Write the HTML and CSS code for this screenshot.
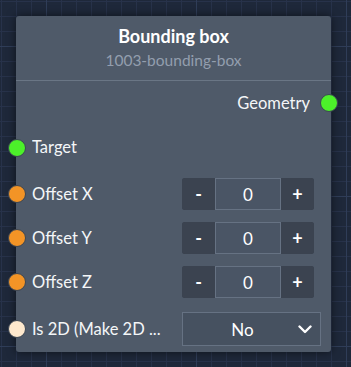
FILE: index.html
```html
<!DOCTYPE html>
<html>
<head>
<meta charset="utf-8">
<link rel="stylesheet" href="styles.css">
</head>
<body>
<div class="node">
  <div class="node-header">
    <div class="node-title">Bounding box</div>
    <div class="node-id">1003-bounding-box</div>
  </div>
  <div class="node-body">
    <div class="row row-output">
      <span class="label">Geometry</span>
      <span class="dot dot-out dot-green"></span>
    </div>
    <div class="row row-target">
      <span class="dot dot-in dot-green"></span>
      <span class="label">Target</span>
    </div>
    <div class="row row-input">
      <span class="dot dot-in dot-orange"></span>
      <span class="label">Offset X</span>
      <div class="stepper">
        <button class="step">-</button>
        <span class="value">0</span>
        <button class="step">+</button>
      </div>
    </div>
    <div class="row row-input">
      <span class="dot dot-in dot-orange"></span>
      <span class="label">Offset Y</span>
      <div class="stepper">
        <button class="step">-</button>
        <span class="value">0</span>
        <button class="step">+</button>
      </div>
    </div>
    <div class="row row-input">
      <span class="dot dot-in dot-orange"></span>
      <span class="label">Offset Z</span>
      <div class="stepper">
        <button class="step">-</button>
        <span class="value">0</span>
        <button class="step">+</button>
      </div>
    </div>
    <div class="row row-select">
      <span class="dot dot-in dot-cream"></span>
      <span class="label">Is 2D (Make 2D ...</span>
      <div class="select">
        <span class="select-value">No</span>
        <svg class="chevron" width="14" height="9" viewBox="0 0 14 9"><path d="M1.5 1.5 L7 7 L12.5 1.5" fill="none" stroke="#ffffff" stroke-width="2.4" stroke-linecap="round" stroke-linejoin="round"/></svg>
      </div>
    </div>
  </div>
</div>
</body>
</html>
```

FILE: styles.css
```css
html, body {
  margin: 0;
  padding: 0;
}
body {
  width: 351px;
  height: 367px;
  overflow: hidden;
  padding: 16px;
  box-sizing: border-box;
  font-family: "Lato", "Noto Sans", sans-serif;
  color: #f2f4f7;
  background:
    linear-gradient(to right, #2f3d58 1px, transparent 1px) 46px 46px / 150px 150px,
    linear-gradient(to bottom, #2f3d58 1px, transparent 1px) 46px 46px / 150px 150px,
    linear-gradient(to right, #27324a 1px, transparent 1px) 1px 1px / 15px 15px,
    linear-gradient(to bottom, #27324a 1px, transparent 1px) 1px 1px / 15px 15px,
    #1e283a;
}
.node {
  position: relative;
  width: 315px;
  height: 336px;
  background: #4f5a69;
  border-radius: 3px;
  box-shadow: 0 0 10px rgba(0, 0, 0, 0.55);
}
.node-header {
  height: 64px;
  border-bottom: 1px solid #6a7685;
  display: flex;
  flex-direction: column;
  align-items: center;
}
.node-title {
  margin-top: 10px;
  font-size: 18px;
  font-weight: 700;
  line-height: 21px;
  color: #ffffff;
}
.node-id {
  margin-top: 3px;
  font-size: 15.5px;
  line-height: 20px;
  color: #939eae;
}
.node-body {
  display: flex;
  flex-direction: column;
}
.row {
  position: relative;
  display: grid;
  grid-template-columns: 140px auto;
  column-gap: 10px;
  align-items: center;
  padding-left: 16px;
  box-sizing: border-box;
}
.label {
  font-size: 16.5px;
  line-height: 20px;
  color: #f4f6f8;
  white-space: nowrap;
  overflow: hidden;
}
.row-output {
  display: flex;
  justify-content: flex-end;
  height: 44px;
  padding-right: 21px;
}
.row-target {
  height: 47px;
  padding-bottom: 3px;
}
.row-input {
  height: 44px;
  padding-top: 6px;
  padding-bottom: 6px;
}
.row-select {
  padding-top: 8px;
}
.dot {
  position: absolute;
  width: 16px;
  height: 16px;
  border-radius: 50%;
  border: 1px solid #3c4653;
  top: 50%;
  margin-top: -9px;
}
.dot-in { left: -8px; }
.dot-out { right: -7px; }
.row-target .dot { margin-top: -10px; }
.row-select .dot { margin-top: -5px; }
.dot-green { background: #4cf02a; }
.dot-orange { background: #f39426; }
.dot-cream { background: #fde8cd; }
.stepper {
  display: flex;
  width: 132px;
  height: 32px;
  border-radius: 3px;
  overflow: hidden;
  background: #3b4350;
}
.step {
  width: 33px;
  border: none;
  background: #3b4350;
  color: #ffffff;
  font-family: "Lato", sans-serif;
  font-weight: 700;
  font-size: 18px;
  padding: 0;
  display: flex;
  align-items: center;
  justify-content: center;
}
.value {
  flex: 1;
  display: flex;
  align-items: center;
  justify-content: center;
  background: #4a5565;
  border: 1px solid #667283;
  font-size: 17px;
  color: #ffffff;
}
.select {
  position: relative;
  width: 139px;
  height: 34px;
  box-sizing: border-box;
  border: 1px solid #667283;
  background: #465160;
  display: flex;
  align-items: center;
  justify-content: center;
}
.select-value {
  font-size: 17px;
  color: #ffffff;
  margin-right: 18px;
}
.chevron {
  position: absolute;
  right: 8px;
  top: 12px;
}
```
